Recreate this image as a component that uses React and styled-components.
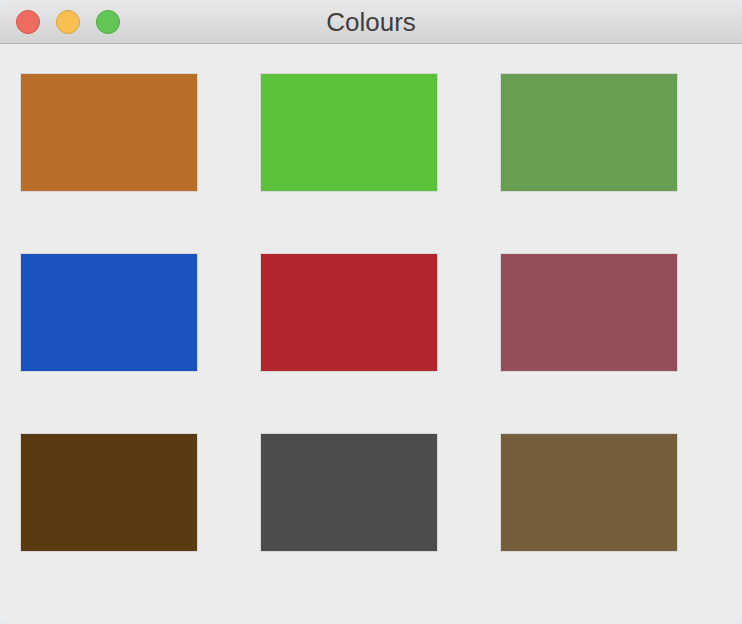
import React from "react";
import styled, { createGlobalStyle } from "styled-components";

const Global = createGlobalStyle`
  html, body { margin: 0; padding: 0; background: #e6e9ee; }
  body { width: 742px; height: 624px; overflow: hidden; }
  #root { width: 742px; height: 624px; }
`;

const Window = styled.div`
  width: 742px;
  height: 624px;
  box-sizing: border-box;
  display: flex;
  flex-direction: column;
  background: #ececec;
  border-radius: 10px;
  overflow: hidden;
  font-family: "Liberation Sans", Arial, sans-serif;
`;

const TitleBar = styled.div`
  height: 43px;
  flex: none;
  display: flex;
  align-items: center;
  position: relative;
  background: linear-gradient(#e9e9e9, #d2d2d2);
  border-bottom: 1px solid #b1b1b1;
`;

const Lights = styled.div`
  display: flex;
  gap: 16px;
  padding-left: 16px;
  padding-top: 1px;
`;

const Light = styled.span`
  width: 22px;
  height: 22px;
  border-radius: 50%;
  background: ${(p) => p.$fill};
  border: 1px solid ${(p) => p.$edge};
`;

const Title = styled.div`
  position: absolute;
  left: 0;
  right: 0;
  top: 0;
  bottom: 0;
  display: flex;
  align-items: center;
  justify-content: center;
  font-size: 26px;
  color: #3f3f3f;
  padding-top: 1px;
  pointer-events: none;
`;

const Grid = styled.div`
  display: grid;
  grid-template-columns: repeat(3, 178px);
  grid-auto-rows: 119px;
  column-gap: 62px;
  row-gap: 61px;
  padding: 29px 0 0 20px;
`;

const Swatch = styled.div`
  box-sizing: border-box;
  border: 1px solid #d7d7d7;
  background: ${(p) => p.$color};
`;

const colours = [
  "#b86e28",
  "#5cc13b",
  "#679e52",
  "#1a52be",
  "#b3262e",
  "#934e58",
  "#5a3a11",
  "#4c4c4c",
  "#755e3c",
];

export default function App() {
  return (
    <>
      <Global />
      <Window>
        <TitleBar>
          <Lights>
            <Light $fill="#ee6b60" $edge="#d25448" />
            <Light $fill="#f7bf4f" $edge="#d8a13f" />
            <Light $fill="#62c655" $edge="#50a840" />
          </Lights>
          <Title>Colours</Title>
        </TitleBar>
        <Grid>
          {colours.map((c) => (
            <Swatch key={c} $color={c} />
          ))}
        </Grid>
      </Window>
    </>
  );
}
